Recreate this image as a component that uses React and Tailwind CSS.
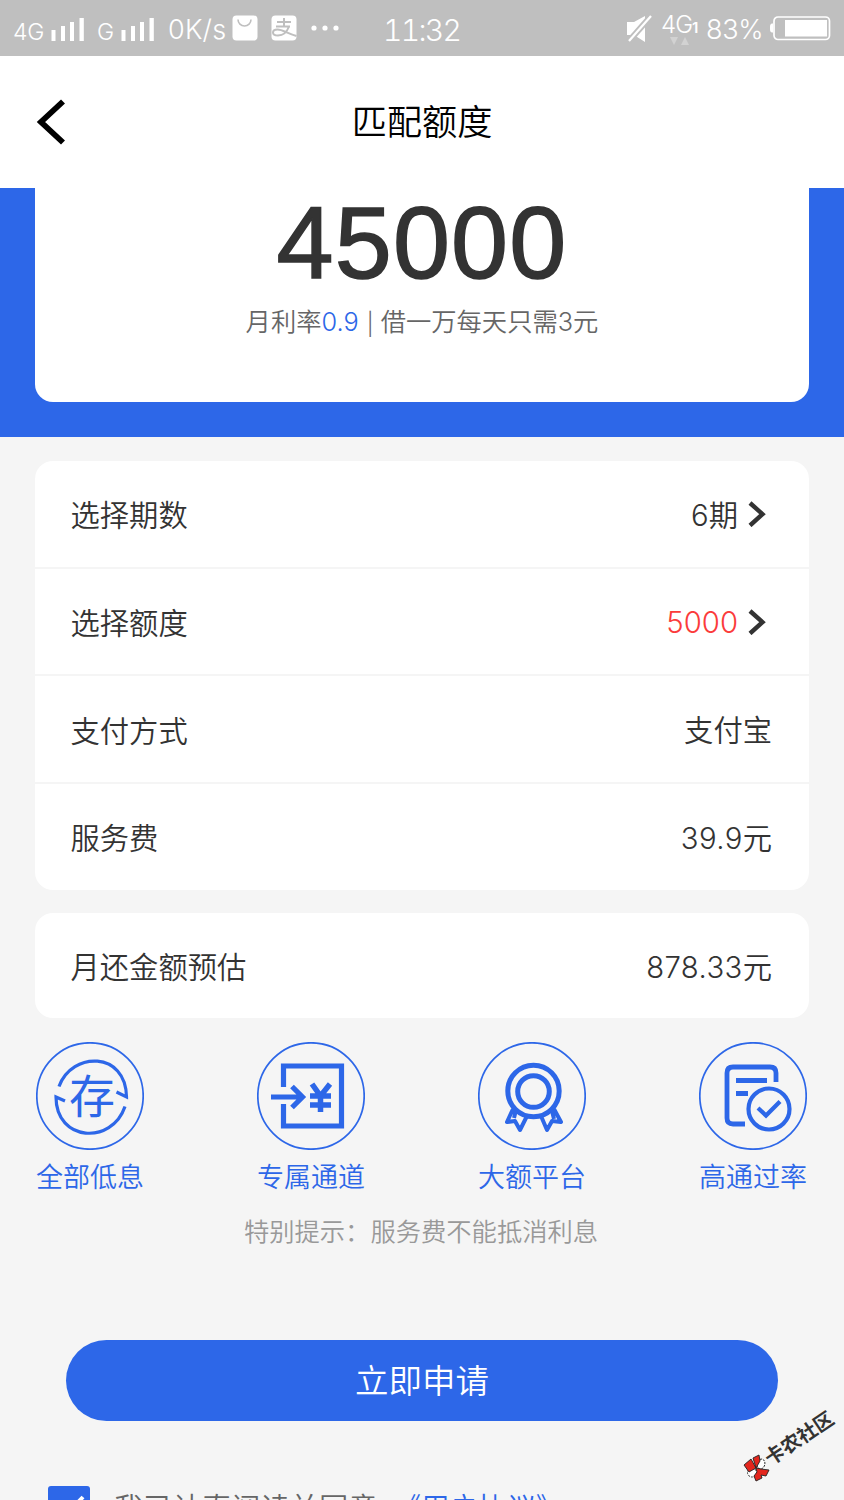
import React from 'react';

function Signal() {
  return (
    <svg viewBox="0 0 34 26" className="h-[26px] w-[34px] shrink-0 fill-white">
      <rect x="0.5" y="13" width="4" height="11" />
      <rect x="10" y="9" width="4" height="15" />
      <rect x="19" y="5" width="4" height="19" />
      <rect x="28.5" y="1" width="4.3" height="23" />
    </svg>
  );
}

function StatusBar() {
  return (
    <div className="flex h-14 shrink-0 items-center bg-[#bfbfbf] text-white">
      <span className="ml-[13px] mt-[9px] w-[38px] text-[23px] leading-none tracking-[-0.3px]">4G</span>
      <div className="mt-[3px] flex"><Signal /></div>
      <span className="ml-[12px] mt-[9px] w-[24px] text-[23px] leading-none">G</span>
      <div className="mt-[3px] flex"><Signal /></div>
      <span className="ml-[13px] mt-[2px] w-[64px] whitespace-nowrap text-[27px] leading-none tracking-[0.2px]">0K/s</span>
      <svg viewBox="0 0 26 26" className="h-[26px] w-[26px] shrink-0">
        <rect x="0.5" y="0.5" width="25" height="25" rx="4" fill="#fff" />
        <path d="M6 4.5a6.5 6.5 0 0 0 13 0" fill="none" stroke="#bfbfbf" strokeWidth="1.6" />
      </svg>
      <svg viewBox="0 0 26 26" className="ml-[13px] h-[26px] w-[26px] shrink-0">
        <rect x="0.5" y="0.5" width="25" height="25" rx="4" fill="#fff" />
        <path
          d="M6 7h14M13 3v8M5 11.500h14M18 11.500c-1.500 4-5 9-11 9-3 0-5-1-5-3s2-3 4.500-3c5 0 9 3.500 19 6.500"
          fill="none"
          stroke="#bfbfbf"
          strokeWidth="2"
        />
      </svg>
      <svg viewBox="0 0 30 6" className="ml-[13px] h-[6px] w-[30px] shrink-0 fill-white">
        <circle cx="4" cy="3" r="2.600" />
        <circle cx="15" cy="3" r="2.600" />
        <circle cx="26" cy="3" r="2.600" />
      </svg>
      <span className="ml-[43px] mt-[3px] w-[78px] whitespace-nowrap text-[30px] leading-none tracking-[-1.700px] tabular-nums">11:32</span>
      <svg viewBox="0 0 26 28" className="ml-auto mt-[2px] h-7 w-[26px] shrink-0">
        <path d="M1 7h7l11-6v26L8 20H1z" fill="#fff" />
        <path d="M3 26 25 1" stroke="#bfbfbf" strokeWidth="6" />
        <path d="M3 26 25 1" stroke="#fff" strokeWidth="2.200" />
      </svg>
      <div className="ml-[9px] mt-[1px] flex w-[45px] flex-col">
        <div className="flex items-end">
          <span className="w-[31px] text-[24px] leading-[24px] tracking-[-0.9px]">4G</span>
          <span className="text-[15px] font-semibold leading-[18px]">1</span>
        </div>
        <svg viewBox="0 0 20 8" className="ml-[9px] h-2 w-5 fill-[#d2d2d2]">
          <path d="M0 0h8L4 8zM11 8h8L15 0z" />
        </svg>
      </div>
      <span className="mt-[2px] w-[63px] whitespace-nowrap text-[27px] leading-none tracking-[-0.3px]">83%</span>
      <svg viewBox="0 0 62 26" className="mr-[13px] h-[26px] w-[62px] shrink-0">
        <path d="M4 8.500C1 8.500 1 10 1 13s0 4.500 3 4.500z" fill="#fff" />
        <rect x="5" y="2" width="55.500" height="22.500" rx="4" fill="none" stroke="#fff" strokeWidth="1.700" />
        <rect x="16" y="5" width="42" height="16.500" fill="#fff" />
      </svg>
    </div>
  );
}

function Chevron() {
  return (
    <svg viewBox="0 0 18 26" className="ml-[10px] mr-[6px] h-[26px] w-[18px] shrink-0">
      <path d="M2 2 14.500 13.200 2 24.500" fill="none" stroke="#333" strokeWidth="4.400" />
    </svg>
  );
}

function Row({ label, value, unit, arrow, red, last }) {
  return (
    <div
      className={
        'flex items-center justify-between pl-[35.500px] pr-[37px] text-[29.300px] text-[#333] ' +
        (last ? 'h-[105.500px]' : 'h-[107.700px] border-b-2 border-[#f5f5f5]')
      }
    >
      <span className="pt-[5px]">{label}</span>
      <span className="flex items-center">
        <span className={red ? 'pt-[3px] text-[#fb3b3b]' : 'pt-[4px]'}>
          {unit ? <span className="tracking-[0.4px]">{value}</span> : value}
          {unit}
        </span>
        {arrow && <Chevron />}
      </span>
    </div>
  );
}

function DepositIcon() {
  return (
    <>
      <g fill="none" strokeWidth="3.200">
        <path d="M23 44.500C36 9 90 9 90.500 55l-10-5" />
        <path d="M29 59l-9-4c0 45 56 48 69 9.500" />
      </g>
      <text x="56" y="70.500" textAnchor="middle" fontSize="46" stroke="none" fill="#2d67e8" className="font-normal">
        存
      </text>
    </>
  );
}

function ChannelIcon() {
  return (
    <g fill="none" strokeWidth="5.200">
      <path d="M26.500 45V24h58v60h-58V62" />
      <path d="M14 55h31M35 44.500l10.500 10.500L35 65.500" />
      <path d="M55 42l8.500 12L73 42M53 54h21M53 63h21M63.500 53v17" strokeWidth="5.500" />
    </g>
  );
}

function MedalIcon() {
  return (
    <g fill="none" strokeWidth="5">
      <circle cx="55.500" cy="49" r="25.700" />
      <circle cx="55.500" cy="49.500" r="15.800" />
      <path
        d="M35 67l-6 13 8-1 5 9 7-14M38 68l-2 8M76 67l7 13-9-1-5 9-6-14M74 69l2 8"
        strokeWidth="4"
        strokeLinejoin="round"
      />
    </g>
  );
}

function ApprovedIcon() {
  return (
    <g fill="none" strokeWidth="4.800">
      <path d="M46 82H34q-6 0-6-6V31q0-6 6-6h37q6 0 6 6v9" />
      <path d="M37 38.500h31M37 51.500h12" />
      <circle cx="70" cy="67" r="20.500" strokeWidth="4.200" />
      <path d="M59 66l8 7.500L81 59.500" strokeWidth="4.200" />
    </g>
  );
}

function Feature({ label, children }) {
  return (
    <div className="flex w-[108px] flex-col items-center">
      <svg viewBox="0 0 108 108" className="h-[108px] w-[108px]" stroke="#2d67e8">
        <circle cx="54" cy="54" r="53.200" fill="none" strokeWidth="1.700" />
        {children}
      </svg>
      <span className="mt-[8px] whitespace-nowrap text-[27px] leading-[40px] text-[#2d67e8]">{label}</span>
    </div>
  );
}

function Watermark() {
  return (
    <svg viewBox="0 0 124 110" className="absolute bottom-0 right-0 h-[110px] w-[124px]">
      <g stroke="#222" strokeWidth="0.900">
        <ellipse cx="41" cy="74" rx="3.800" ry="5" transform="rotate(15 41 74)" fill="#fff" strokeDasharray="2 1" />
        <ellipse cx="32" cy="82.500" rx="4.500" ry="4.500" fill="#fff" strokeDasharray="2 1" />
        <path d="M24 75l7-6 5 9-7 4zM33 68l6-3 1 6-4 7zM36 78l5 1 8 1-3 6-5-1 1 3-6 3-2-5 3-4z" fill="#e3261d" />
      </g>
      <text
        transform="translate(50.500 76) rotate(-34)"
        fontSize="19.600"
        fill="#333"
        className="font-bold"
      >
        卡农社区
      </text>
    </svg>
  );
}

export default function App() {
  return (
    <div className="relative flex h-[1500px] w-[844px] flex-col overflow-hidden bg-[#f5f5f5] font-['Inter','Noto_Sans_CJK_SC',sans-serif] font-[350]">
      <StatusBar />
      <header className="grid h-[131.500px] shrink-0 grid-cols-[100px_1fr_100px] items-center bg-white">
        <svg viewBox="0 0 30 48" className="ml-[36px] h-12 w-[30px]">
          <path d="M27 3.500 5 24l22 20.500" fill="none" stroke="#000" strokeWidth="5.800" />
        </svg>
        <h1 className="pt-[2px] text-center text-[35.200px] leading-none text-black">匹配额度</h1>
      </header>

      <section className="h-[249.500px] shrink-0 bg-[#2d67e8] px-[35px]">
        <div className="flex h-[214.500px] flex-col items-center rounded-b-[18px] bg-white">
          <div className="mt-[3px] font-['Liberation_Sans',sans-serif] text-[102.500px] font-normal leading-[104px] tracking-[1.200px] text-[#333] [-webkit-text-stroke:1.500px_#333]">
            45000
          </div>
          <div className="mt-[8px] flex items-center whitespace-pre text-[25.300px] leading-[36px] text-[#666]">
            <span>月利率<span className="text-[#2d67e8]">0.9</span></span>
            <span className="mx-[8px] w-[6px] pt-[3px] text-center text-[22px]">|</span>
            <span>借一万每天只需3元</span>
          </div>
        </div>
      </section>

      <section className="mx-[35px] mt-[24px] shrink-0 rounded-[18px] bg-white">
        <Row label="选择期数" value="6期" arrow />
        <Row label="选择额度" value="5000" arrow red />
        <Row label="支付方式" value="支付宝" />
        <Row label="服务费" value="39.9" unit="元" last />
      </section>
      <section className="mx-[35px] mt-[23.400px] shrink-0 rounded-[18px] bg-white">
        <Row label="月还金额预估" value="878.33" unit="元" last />
      </section>

      <section className="mt-[23.400px] flex shrink-0 justify-between pl-[36px] pr-[37px]">
        <Feature label="全部低息"><DepositIcon /></Feature>
        <Feature label="专属通道"><ChannelIcon /></Feature>
        <Feature label="大额平台"><MedalIcon /></Feature>
        <Feature label="高通过率"><ApprovedIcon /></Feature>
      </section>
      <p className="mr-[2px] mt-[16px] shrink-0 text-center text-[25.300px] leading-[36px] text-[#999]">特别提示：服务费不能抵消利息</p>

      <button className="mx-[66px] mt-[90px] h-[81.500px] shrink-0 rounded-full bg-[#2d67e8] pt-[2px] text-[33.500px] leading-none text-white">
        立即申请
      </button>

      <div className="mt-[64.500px] flex shrink-0 items-start pl-[48px]">
        <svg viewBox="0 0 42 42" className="h-[42px] w-[42px]">
          <rect width="42" height="42" rx="3" fill="#2d67e8" />
          <path d="M9 20l9 9L35 11" fill="none" stroke="#fff" strokeWidth="4" />
        </svg>
        <span className="ml-[24px] mt-[2px] whitespace-nowrap text-[29.300px] leading-[42px] text-[#666]">我已认真阅读并同意</span>
        <span className="ml-[14px] mt-[2px] whitespace-nowrap text-[29.300px] leading-[42px] tracking-[-0.5px] text-[#2d67e8]">《用户协议》</span>
      </div>
      <Watermark />
    </div>
  );
}
